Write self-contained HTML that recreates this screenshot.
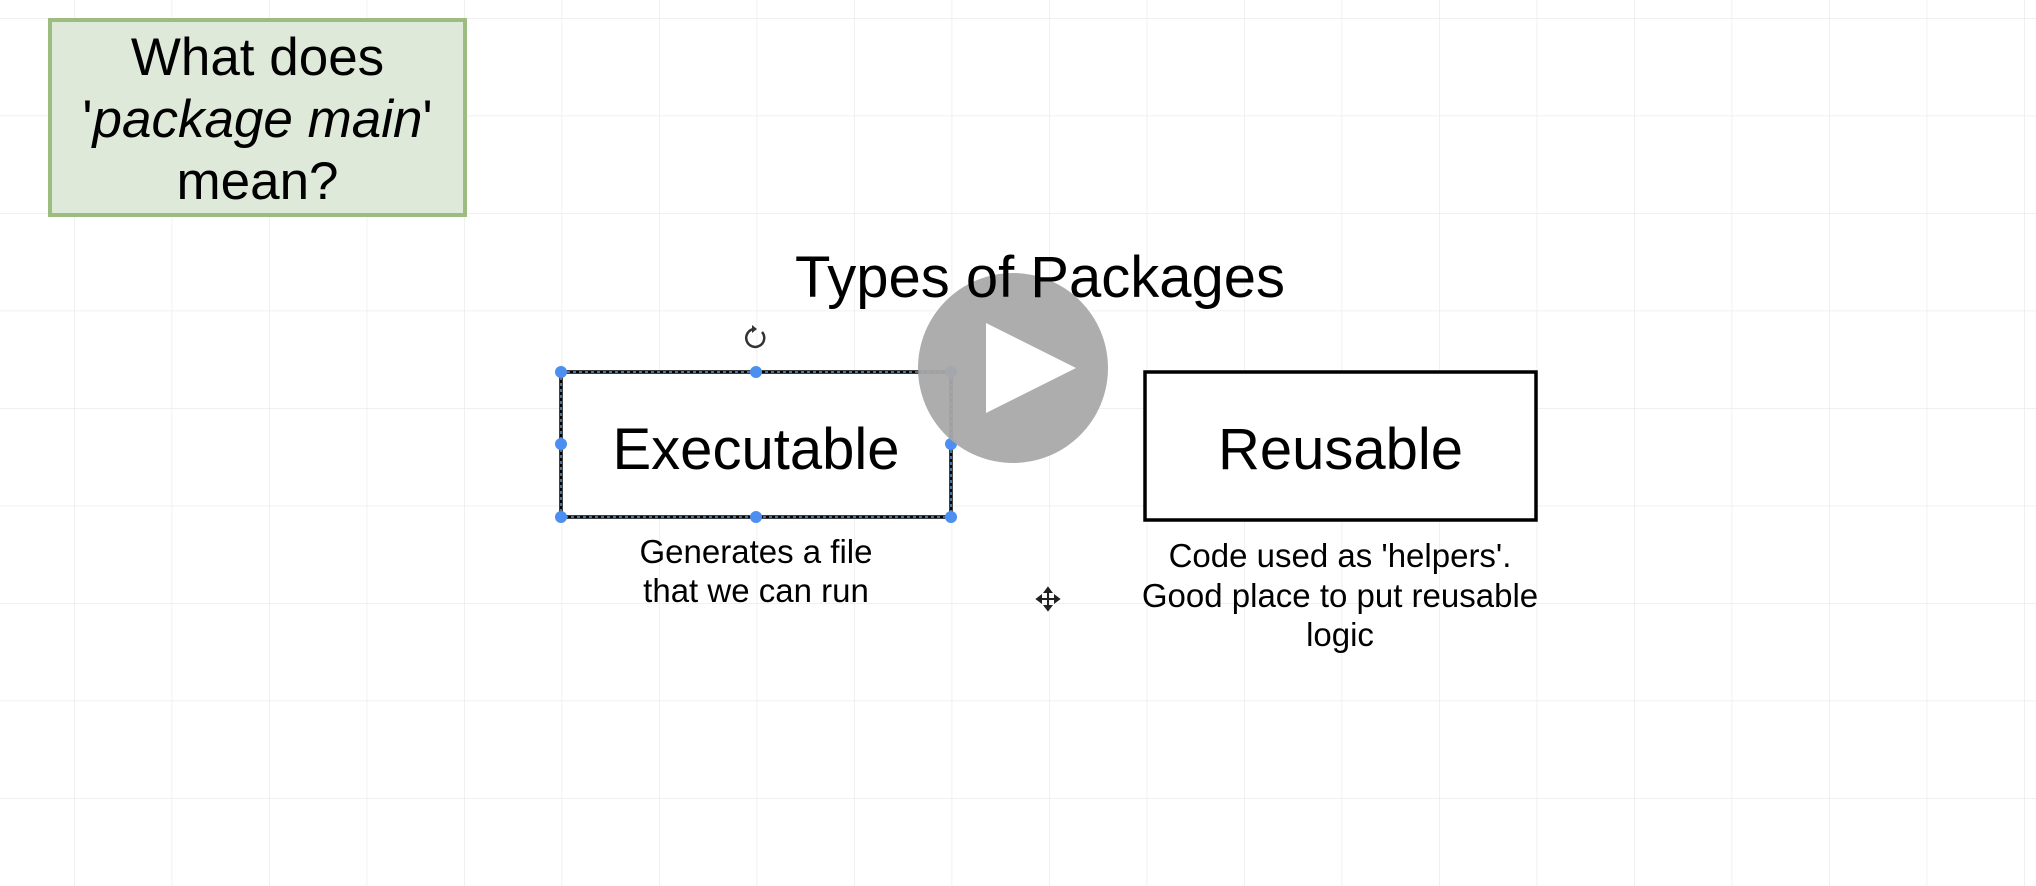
<!DOCTYPE html>
<html><head><meta charset="utf-8"><style>
html,body{margin:0;padding:0;width:2036px;height:886px;overflow:hidden;background:#fff;font-family:"Liberation Sans",Arial,sans-serif;}
.t{position:absolute;text-align:center;color:#000;white-space:nowrap;}
</style></head><body>
<svg width="2036" height="886" style="position:absolute;left:0;top:0">
<defs><pattern id="g" x="74" y="18" width="97.5" height="97.5" patternUnits="userSpaceOnUse"><path d="M0 0V97.5M0 0H97.5" stroke="#ececec" stroke-width="1.5" fill="none"/></pattern></defs>
<rect width="2036" height="886" fill="url(#g)"/>
<rect x="50" y="20" width="415" height="195" fill="#dfe9d9" stroke="#9dbd80" stroke-width="4"/>
<rect x="1145" y="372" width="391" height="148" fill="#fff" stroke="#000" stroke-width="3.5"/>
<rect x="561" y="372" width="390" height="145" fill="#fff" stroke="#000" stroke-width="3.5"/>
<rect x="561" y="372" width="390" height="145" fill="none" stroke="#5b9bd5" stroke-width="1.5" stroke-dasharray="3 3"/>
<g fill="#4c8ff0"><circle cx="561" cy="372" r="6"/><circle cx="756" cy="372" r="6"/><circle cx="951" cy="372" r="6"/><circle cx="561" cy="444" r="6"/><circle cx="951" cy="444" r="6"/><circle cx="561" cy="517" r="6"/><circle cx="756" cy="517" r="6"/><circle cx="951" cy="517" r="6"/></g>
<path d="M762 332a9 9 0 1 1-8-3" fill="none" stroke="#333" stroke-width="2.5"/><path d="M752 325l5 4-5 4z" fill="#333"/>
<g transform="translate(1048,599)" stroke="#222" stroke-width="2" fill="#222"><path d="M-9 0H9M0-9V9"/><path d="M-11 0l4-3v6zM11 0l-4-3v6zM0-11l-3 4h6zM0 11l-3-4h6z"/></g>
<circle cx="1013" cy="368" r="95" fill="#a9a9a9" fill-opacity="0.95"/>
<path d="M986 323L1076 368L986 413Z" fill="#fff"/>
</svg>
<div class="t" style="left:50px;width:415px;top:27px;font-size:53px;line-height:62px;">What does<br>'<i>package main</i>'<br>mean?</div>
<div class="t" style="left:740px;width:600px;top:245px;font-size:58px;line-height:66px;">Types of Packages</div>
<div class="t" style="left:561px;width:390px;top:418px;font-size:58px;line-height:64px;">Executable</div>
<div class="t" style="left:1145px;width:391px;top:418px;font-size:58px;line-height:64px;">Reusable</div>
<div class="t" style="left:556px;width:400px;top:532px;font-size:33px;line-height:39px;">Generates a file<br>that we can run</div>
<div class="t" style="left:1090px;width:500px;top:536px;font-size:33px;line-height:39.5px;">Code used as 'helpers'.<br>Good place to put reusable<br>logic</div>
</body></html>
